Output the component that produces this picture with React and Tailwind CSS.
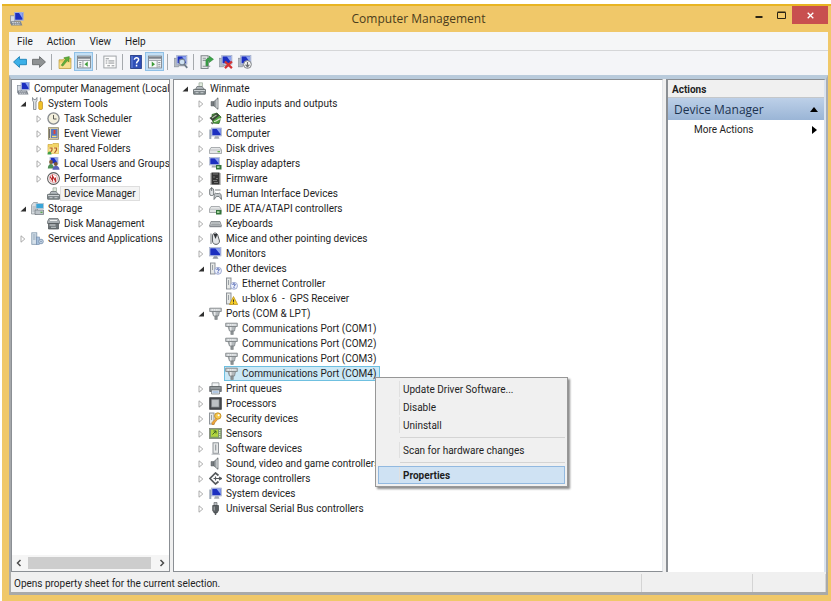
import React, { useState } from 'react';
import clsx from 'clsx';

const Icon = ({ size = 13, children }) => (
  <svg width={size} height={size} viewBox="0 0 13 13" className="shrink-0" aria-hidden="true">
    {children}
  </svg>
);

/* Shared icon parts */
const Screen = ({ x = 4, y = 0, w = 8, h = 7 }) => (
  <g>
    <rect x={x} y={y} width={w} height={h} fill="#ccd6ee" stroke="#9aa5c4" strokeWidth=".6" />
    <rect x={x + 0.8} y={y + 0.8} width={w - 1.6} height={h - 1.6} fill="#1c2fc0" />
    <path d={`M${x + w / 2} ${y + 0.8}h${w / 2 - 0.8}v${h - 2.5}z`} fill="#8ea5f0" />
  </g>
);

const Chip = () => (
  <g>
    <rect x="7" y="8" width="5.5" height="4.5" fill="#34733b" />
    <rect x="8" y="9.200" width="2.500" height="1.800" fill="#a9d7a2" />
  </g>
);

const Tower = ({ x = 1 }) => (
  <g>
    <rect x={x + 0.5} y="1" width="4.5" height="11" fill="#e6e8e6" stroke="#858b90" strokeWidth=".9" />
    <path d={`M${x + 2.5} 3v5`} stroke="#9aa0a5" strokeWidth="1" />
  </g>
);

/* Small tower and monitor used by the toolbar's device buttons */
const Machine = () => (
  <g>
    <rect x="0" y="3" width="4" height="8" fill="#b4bac2" stroke="#858c96" strokeWidth=".6" />
    <Screen x={2.5} y={0.5} w={9.5} h={8} />
    <path d="M5 9h4l1 1.500H4z" fill="#9ca2ab" />
  </g>
);

const ICONS = {
  management: (
    <>
      <rect x=".5" y="3.5" width="4" height="7" fill="#d7dce3" stroke="#858d99" strokeWidth=".7" />
      <Screen w={8.5} h={8} />
      <path d="M.5 8.500h9.500l1.500 4H1z" fill="#7e858e" />
      <path d="M2 9.800h7M2.500 11.300h7" stroke="#e1e5ea" strokeWidth=".8" strokeDasharray="1.500 .6" />
    </>
  ),
  tools: (
    <>
      <path d="M1.500 .5v3l1 1.500V12.500h2.500V5l1-1.500v-3L4.700 2.500h-2z" fill="#dde0e3" stroke="#6b737c" strokeWidth=".7" />
      <path d="M9.500 .5v5" stroke="#8f969d" strokeWidth="1.200" />
      <rect x="7.700" y="4.500" width="3.800" height="8" rx="1.200" fill="#f1c22a" stroke="#b37b10" strokeWidth=".6" />
    </>
  ),
  clock: (
    <>
      <circle cx="6.500" cy="6.500" r="6.200" fill="#85898d" />
      <circle cx="6.500" cy="6.500" r="4.900" fill="#f3efdc" />
      <path d="M6.500 3v4h3" stroke="#5b5b55" strokeWidth="1" fill="none" />
    </>
  ),
  event: (
    <>
      <rect x="1.500" y=".7" width="10" height="11.600" fill="#d8cfa9" stroke="#8c8468" strokeWidth=".8" />
      <rect x="4" y="2" width="6.500" height="9" fill="#5a78bd" />
      <path d="M7.500 3v4" stroke="#e64332" strokeWidth="1.800" />
      <path d="M5 9.500h4.500" stroke="#f4df79" strokeWidth="1.500" />
      <path d="M2.500 2v9" stroke="#76706b" strokeWidth="1" />
    </>
  ),
  folderShare: (
    <>
      <path d="M1 2.500h4l1-1h5.500v10H1z" fill="#f2d565" stroke="#c69b2b" strokeWidth=".6" />
      <path d="M1.500 5h10v6.500h-10z" fill="#f9e48f" />
      <path d="M2.500 6h2.500v2l-2 3M7 6h2.500v2l-2 3" stroke="#b35f2a" strokeWidth="1.200" fill="none" />
      <path d="M.5 12.500c0-4 4-4 4 0z" fill="#3fa04a" />
    </>
  ),
  users: (
    <>
      <Screen x={3} y={0} w={8} h={7} />
      <circle cx="4" cy="5" r="1.900" fill="#8a5f34" />
      <path d="M.8 11.500c0-6 6.200-6 6.200 0z" fill="#4f8f57" />
      <circle cx="8.800" cy="7" r="1.900" fill="#7a5636" />
      <path d="M5.500 12.800c0-5.500 7-5.500 7 0z" fill="#5a62b8" />
    </>
  ),
  performance: (
    <>
      <circle cx="6.500" cy="6.500" r="5.900" fill="#fff" stroke="#5d5d5d" strokeWidth="1.100" />
      <circle cx="6.500" cy="6.500" r="4" fill="#fff" stroke="#d98b8b" strokeWidth=".8" />
      <path d="M3 4.500l2.500 4V4l3 5V5.500" stroke="#b92b2b" strokeWidth="1.200" fill="none" />
    </>
  ),
  device: (
    <>
      <path d="M6 5V.8h3.500V5" fill="#dfe9dc" stroke="#9aa79a" strokeWidth=".7" />
      <path d="M2.500 7.500l1.500-3h5l2.500 3z" fill="#b4bbbf" stroke="#63696d" strokeWidth=".7" />
      <rect x=".5" y="7.300" width="12" height="5" rx=".5" fill="#7e868a" stroke="#565d60" strokeWidth=".7" />
      <path d="M1 8.500h11" stroke="#cfd4d6" strokeWidth="1.100" />
      <path d="M2.500 10.700h3M7.500 10.700h3" stroke="#d4d9db" strokeWidth=".9" />
    </>
  ),
  storage: (
    <>
      <path d="M.5 3l2-2.500h4V12h-6z" fill="#d9dee2" stroke="#858c92" strokeWidth=".7" />
      <path d="M1.500 5h4M1.500 7h4M1.500 9h2" stroke="#8d959b" strokeWidth=".7" />
      <rect x="5" y="1.500" width="7.500" height="5" fill="#3aa5d8" stroke="#b5c5d0" strokeWidth=".8" />
      <path d="M4 8h8.500v4.500H4z" fill="#bcc3c9" stroke="#6c737a" strokeWidth=".7" />
      <rect x="9.500" y="9.700" width="2" height="1.200" fill="#52a944" />
    </>
  ),
  diskMgmt: (
    <>
      <path d="M2 1.500h9l1.500 3v2H.5v-2z" fill="#a6acb0" stroke="#62686c" strokeWidth=".7" />
      <path d="M3 3.500h7" stroke="#eef0f0" strokeWidth="1" />
      <path d="M1.500 6.500h10v5.500h-10z" fill="#6c7377" stroke="#4b5053" strokeWidth=".7" />
      <path d="M2.500 8h6" stroke="#dde1e2" strokeWidth="1" />
      <path d="M4 10.300h5" stroke="#c2c7c9" strokeWidth="1" />
    </>
  ),
  services: (
    <>
      <rect x=".8" y=".8" width="5" height="11.500" fill="#d5e0ea" stroke="#7f95aa" strokeWidth=".8" />
      <path d="M2 3h2.500M2 5h2.500M2 7h2.500" stroke="#7f95aa" strokeWidth=".8" />
      <rect x="5.500" y="5" width="3" height="7.500" fill="#a5bedb" stroke="#6d87a8" strokeWidth=".6" />
      <circle cx="10" cy="9.500" r="2.300" fill="#c6d5e4" stroke="#7e96b1" strokeWidth=".9" />
      <circle cx="10" cy="9.500" r=".7" fill="#6d87a8" />
    </>
  ),
  speaker: (
    <>
      <path d="M2 4.500h3v4.500H2z" fill="#777c80" stroke="#5c6164" strokeWidth=".5" />
      <path d="M5 4.500L9 .8v11.500L5 9z" fill="#9ba1a5" stroke="#5c6164" strokeWidth=".7" />
      <path d="M8 2.500v8.300" stroke="#d5d9db" strokeWidth="1.200" />
    </>
  ),
  battery: (
    <>
      <path d="M3 2.500l5-1.500 4 4-2 6.500-6-.5z" fill="#4fa03f" stroke="#2e6424" strokeWidth=".8" />
      <path d="M.5 6l7-5 3 2.500-7 5.500z" fill="#3c443a" />
      <path d="M3 6l4.500-3" stroke="#a9c79c" strokeWidth="1.200" />
      <path d="M5 9.500c3 0 4-3 7-2.500" stroke="#dfe7d4" strokeWidth="1.200" fill="none" />
      <path d="M2 10.500l2 1.500" stroke="#5d635a" strokeWidth="1.200" />
    </>
  ),
  computer: (
    <>
      <rect x=".3" y="2.500" width="2" height="9.500" fill="#9aa6b6" />
      <Screen x={2.5} y={1} w={10} h={8} />
      <path d="M6 9.300h3.500l1 2.500H5z" fill="#a5aab2" />
    </>
  ),
  disk: (
    <>
      <path d="M2 5.500h9l1.500 2.500v3.500H.5V8z" fill="#e4e6e7" stroke="#8c9194" strokeWidth=".7" />
      <path d="M.8 8h11.500" stroke="#a8adb0" strokeWidth=".6" />
      <rect x="8.500" y="9" width="2.500" height="1.300" fill="#5db04b" />
    </>
  ),
  display: (
    <>
      <Screen x={0.5} y={0.5} w={10} h={7.5} />
      <path d="M3 8.500h4l.5 2H2.500z" fill="#a5aab2" />
      <Chip />
    </>
  ),
  firmware: (
    <>
      <path d="M1 2h11M1 4h11M1 6h11M1 8h11M1 10h11M1 12h11" stroke="#777" strokeWidth=".9" />
      <rect x="2.500" y=".5" width="8" height="12" fill="#333" />
      <path d="M4 2h5M4 5h2M7 6.500h2M4 8.500h4M5 10.500h4" stroke="#858585" strokeWidth=".8" />
    </>
  ),
  hid: (
    <>
      <rect x=".7" y="1.500" width="4" height="7" rx="1.500" fill="#e0e3e5" stroke="#686d71" strokeWidth=".9" />
      <path d="M2.700 0v4M6 3h5.500" stroke="#686d71" strokeWidth=".9" />
      <path d="M5 12.500c0-6 1-7 2.500-6h2c2-1 3 1 3 6l-2.500-3h-2.500z" fill="#bfc4c7" stroke="#63696d" strokeWidth=".8" />
    </>
  ),
  ide: (
    <>
      <path d="M2 4.500h8.500L12 7v3.500H.5V7z" fill="#e4e6e7" stroke="#8c9194" strokeWidth=".7" />
      <path d="M1 7.200h10.500" stroke="#a8adb0" strokeWidth=".6" />
      <Chip />
    </>
  ),
  keyboard: (
    <>
      <path d="M2 4.500h9l1.500 4.500h-12z" fill="#d0d4d6" stroke="#777c80" strokeWidth=".8" />
      <path d="M2.500 6h8M2.200 7.500h8.800" stroke="#8a8f92" strokeWidth=".7" />
      <path d="M.5 9.700h12" stroke="#777c80" strokeWidth="1" />
    </>
  ),
  mouse: (
    <>
      <path d="M3.500 4c0-4 5-4 5.500 0l1.500 5c0 4.500-7 4.500-7 0z" fill="#e4e6e8" stroke="#4b4f52" strokeWidth=".9" />
      <path d="M4.500 2l2 5 2-5z" fill="#2f3235" />
      <path d="M2 1.500V12" stroke="#777c80" strokeWidth="1" />
    </>
  ),
  monitor: (
    <>
      <Screen x={0.5} y={0.5} w={11.5} h={8.5} />
      <path d="M5 9.300h3l1.500 2.500h-6z" fill="#8f96a3" />
    </>
  ),
  unknown: (
    <>
      <Tower />
      <circle cx="9" cy="8.800" r="3.500" fill="#eef2fb" stroke="#8b99c9" strokeWidth=".8" />
      <path d="M7.800 8c0-1.800 2.600-1.600 2.300 0-.1.700-1 .7-1.100 1.500M9 10.200v1" stroke="#2f47a6" strokeWidth="1" fill="none" />
    </>
  ),
  warning: (
    <>
      <Tower />
      <path d="M8.500 4.500l4.200 8H4.500z" fill="#f6ce27" stroke="#b98c12" strokeWidth=".7" />
      <path d="M8.500 7.500v2.300M8.500 10.700v1" stroke="#2b2b2b" strokeWidth="1" />
    </>
  ),
  port: (
    <>
      <path d="M.7 1.200h11.600v3.300H.7z" fill="#c9cdd0" stroke="#7b8083" strokeWidth=".8" />
      <path d="M2.500 2.800h8" stroke="#f4f5f5" strokeWidth="1.200" strokeDasharray="1.500 .8" />
      <path d="M3 4.500h7.500L9.500 9H4.500z" fill="#b4b9bc" stroke="#777c80" strokeWidth=".7" />
      <path d="M5.800 9h2.500v3.500H5.800z" fill="#8e9396" stroke="#6f7477" strokeWidth=".5" />
      <path d="M5.800 5v3.500" stroke="#f4f5f5" strokeWidth="1.200" />
    </>
  ),
  printer: (
    <>
      <path d="M3 .8h7V5H3z" fill="#f2f4f5" stroke="#84898c" strokeWidth=".7" />
      <path d="M.7 4.500h11.600v5H.7z" fill="#7b8184" stroke="#505558" strokeWidth=".7" />
      <path d="M1.500 6h10" stroke="#b9bdc0" strokeWidth=".8" />
      <path d="M2.500 8h8v4h-8z" fill="#e8eef5" stroke="#6b7073" strokeWidth=".7" />
      <path d="M3.500 10h6" stroke="#5e8cc4" strokeWidth=".8" />
    </>
  ),
  processor: (
    <>
      <rect x=".8" y=".8" width="11.400" height="11.400" fill="#4b4e52" stroke="#33363a" />
      <rect x="2.700" y="2.700" width="7.300" height="7.300" fill="#bcc0c4" stroke="#8b8f93" strokeWidth=".7" />
    </>
  ),
  security: (
    <>
      <Tower x={0} />
      <circle cx="8.800" cy="4" r="3.200" fill="#f6c94b" stroke="#ba8420" strokeWidth=".8" />
      <circle cx="9.600" cy="3.300" r="1" fill="#fff" />
      <path d="M7 6.500L3 10.500v2h2l.5-1.500 3-3.500" fill="#f0a93a" stroke="#ba7420" strokeWidth=".6" />
    </>
  ),
  sensor: (
    <>
      <rect x=".5" y="1.500" width="12" height="10" fill="#7d9a66" stroke="#7c8375" strokeWidth=".8" />
      <rect x="2" y="2.700" width="7" height="7" fill="#b2d63f" />
      <path d="M3.500 7.500l3.500-3.500M4.500 4H7v2.500" stroke="#3f6423" strokeWidth="1" fill="none" />
      <path d="M10.700 3v7.500" stroke="#dbe3d2" strokeWidth="1.300" strokeDasharray="1.200 .8" />
    </>
  ),
  software: (
    <>
      <rect x="4" y=".8" width="5.500" height="10.500" fill="#e6e8e8" stroke="#858b90" strokeWidth=".9" />
      <path d="M6.700 2.500v6" stroke="#8e9499" strokeWidth="1.100" />
      <path d="M2.500 12.200h8.500" stroke="#b4b8bb" strokeWidth="1" />
    </>
  ),
  storageCtl: (
    <>
      <path d="M9.500 3.500L6.500 1 1 6.500 6.500 12l3-2.500" fill="none" stroke="#55595c" strokeWidth="1.700" />
      <path d="M4.500 6.500h8M6.500 4.500v4M10 5l2.500 1.500L10 8" fill="none" stroke="#55595c" strokeWidth="1.200" />
    </>
  ),
  usb: (
    <>
      <path d="M5 .5h3V4H5z" fill="#b8bcbf" stroke="#6b7073" strokeWidth=".7" />
      <path d="M3.700 3.500h5.800v5L8 11H5.200L3.700 8.500z" fill="#5a5f62" stroke="#3e4245" strokeWidth=".7" />
      <path d="M5.200 4.500v4" stroke="#b3b7ba" strokeWidth=".9" />
      <path d="M6.500 11v2" stroke="#55595c" strokeWidth="1.400" />
    </>
  ),
};

const TOOL_ICONS = {
  back: <path d="M.5 6.500L6 1.500V4h6.500v5H6v2.500z" fill="#3cb0e8" stroke="#1b7fb5" strokeWidth=".8" />,
  forward: <path d="M12.500 6.500L7 1.500V4H.5v5H7v2.500z" fill="#8f9294" stroke="#65686a" strokeWidth=".8" />,
  up: (
    <>
      <path d="M1 4.500h3.500L6 3h6v9.500H1z" fill="#eed06d" stroke="#b9973a" strokeWidth=".7" />
      <path d="M1.500 7h10v5h-10z" fill="#f6e08f" />
      <path d="M3 9.500L7 4 5.500 2.500 10.500 1.500 10 6.500 8.700 5.200 4.500 10.300z" fill="#5fb03c" stroke="#3e8423" strokeWidth=".5" />
    </>
  ),
  tree: (
    <>
      <rect x=".5" y="1" width="12" height="11" fill="#f7f8f9" stroke="#7d838b" strokeWidth=".8" />
      <path d="M.5 2.500h12" stroke="#7d838b" strokeWidth="2" />
      <path d="M1 5h11M5.500 5v7" stroke="#a4a9ae" strokeWidth="1" />
      <path d="M2 7h2M2 8.700h2M2 10.400h2" stroke="#7b8188" strokeWidth=".8" />
      <path d="M10 6v5L7 8.500z" fill="#3d9c38" />
    </>
  ),
  properties: (
    <>
      <rect x=".8" y="1" width="11.400" height="11" fill="#fcfcfc" stroke="#9da1a5" strokeWidth=".9" />
      <path d="M2.500 3.500h3M2.500 5.500h1.500M5 5.500h5.500M2.500 7.500h1.500M5 7.500h5.500M4 10h2.500M8 10h2.500" stroke="#8b8f93" strokeWidth=".9" />
    </>
  ),
  help: (
    <>
      <rect x="1.500" y=".5" width="10" height="12" fill="#2f4fb8" stroke="#223a86" strokeWidth=".8" />
      <path d="M2.800 1v11" stroke="#7f98e3" strokeWidth=".8" />
      <path d="M5 4.500c0-2.700 4.200-2.500 3.900 0C8.700 6 7 6 7 7.800M7 9v1.600" stroke="#fff" strokeWidth="1.400" fill="none" />
    </>
  ),
  pane: (
    <>
      <rect x=".5" y="1" width="12" height="11" fill="#f7f8f9" stroke="#7d838b" strokeWidth=".8" />
      <path d="M.5 2.500h12" stroke="#7d838b" strokeWidth="2" />
      <path d="M1 5h11M8.500 5v7" stroke="#a4a9ae" strokeWidth="1" />
      <path d="M9.500 7h2M9.500 8.700h2M9.500 10.400h2" stroke="#7b8188" strokeWidth=".8" />
      <path d="M3.500 6v5l3-2.500z" fill="#3d9c38" />
    </>
  ),
  scan: (
    <>
      <Machine />
      <circle cx="7.500" cy="6.500" r="2.700" fill="#cfe2f2" stroke="#7a8694" strokeWidth="1" />
      <path d="M9.300 8.500l3 3.500" stroke="#6e7a88" strokeWidth="1.600" />
    </>
  ),
  update: (
    <>
      <rect x="1" y=".7" width="6.500" height="11.800" fill="#e6e9e9" stroke="#7b8286" strokeWidth=".9" />
      <path d="M2.500 3h3M2.500 5h3M2.500 10.500h7" stroke="#8e9499" strokeWidth="1" />
      <path d="M5.500 10V5.500C5.500 3.500 7 3 8.500 3V1l4 3-4 3V5.200h-1V10z" fill="#3da54a" stroke="#257a31" strokeWidth=".5" />
    </>
  ),
  uninstall: (
    <>
      <Machine />
      <path d="M5.500 6l6.500 6.200M12 6l-6.500 6.200" stroke="#d43333" strokeWidth="2.100" />
    </>
  ),
  disable: (
    <>
      <Machine />
      <circle cx="8.800" cy="8.800" r="3.600" fill="#f5f5f5" stroke="#7c7f83" strokeWidth=".9" />
      <path d="M8.800 6.500v4M7 9l1.800 2 1.800-2" stroke="#6a6d71" strokeWidth="1.100" fill="none" />
    </>
  ),
};

const TOOLBAR = [
  [['back', 'Back'], ['forward', 'Forward']],
  [['up', 'Up one level'], ['tree', 'Show/Hide Console Tree', true]],
  [['properties', 'Properties']],
  [['help', 'Help'], ['pane', 'Show/Hide Action Pane', true]],
  [['scan', 'Scan for hardware changes']],
  [['update', 'Update Driver Software'], ['uninstall', 'Uninstall'], ['disable', 'Disable']],
];

const CONSOLE_TREE = [
  { label: 'Computer Management (Local', icon: 'management', level: -1 },
  { label: 'System Tools', icon: 'tools', level: 0, state: 'open' },
  { label: 'Task Scheduler', icon: 'clock', level: 1, state: 'closed' },
  { label: 'Event Viewer', icon: 'event', level: 1, state: 'closed' },
  { label: 'Shared Folders', icon: 'folderShare', level: 1, state: 'closed' },
  { label: 'Local Users and Groups', icon: 'users', level: 1, state: 'closed' },
  { label: 'Performance', icon: 'performance', level: 1, state: 'closed' },
  { label: 'Device Manager', icon: 'device', level: 1, marked: true },
  { label: 'Storage', icon: 'storage', level: 0, state: 'open' },
  { label: 'Disk Management', icon: 'diskMgmt', level: 1 },
  { label: 'Services and Applications', icon: 'services', level: 0, state: 'closed' },
];

const DEVICE_TREE = [
  { label: 'Winmate', icon: 'device', level: 0, state: 'open' },
  { label: 'Audio inputs and outputs', icon: 'speaker', level: 1, state: 'closed' },
  { label: 'Batteries', icon: 'battery', level: 1, state: 'closed' },
  { label: 'Computer', icon: 'computer', level: 1, state: 'closed' },
  { label: 'Disk drives', icon: 'disk', level: 1, state: 'closed' },
  { label: 'Display adapters', icon: 'display', level: 1, state: 'closed' },
  { label: 'Firmware', icon: 'firmware', level: 1, state: 'closed' },
  { label: 'Human Interface Devices', icon: 'hid', level: 1, state: 'closed' },
  { label: 'IDE ATA/ATAPI controllers', icon: 'ide', level: 1, state: 'closed' },
  { label: 'Keyboards', icon: 'keyboard', level: 1, state: 'closed' },
  { label: 'Mice and other pointing devices', icon: 'mouse', level: 1, state: 'closed' },
  { label: 'Monitors', icon: 'monitor', level: 1, state: 'closed' },
  { label: 'Other devices', icon: 'unknown', level: 1, state: 'open' },
  { label: 'Ethernet Controller', icon: 'unknown', level: 2 },
  { label: 'u-blox 6  -  GPS Receiver', icon: 'warning', level: 2 },
  { label: 'Ports (COM & LPT)', icon: 'port', level: 1, state: 'open' },
  { label: 'Communications Port (COM1)', icon: 'port', level: 2 },
  { label: 'Communications Port (COM2)', icon: 'port', level: 2 },
  { label: 'Communications Port (COM3)', icon: 'port', level: 2 },
  { label: 'Communications Port (COM4)', icon: 'port', level: 2, menu: true },
  { label: 'Print queues', icon: 'printer', level: 1, state: 'closed' },
  { label: 'Processors', icon: 'processor', level: 1, state: 'closed' },
  { label: 'Security devices', icon: 'security', level: 1, state: 'closed' },
  { label: 'Sensors', icon: 'sensor', level: 1, state: 'closed' },
  { label: 'Software devices', icon: 'software', level: 1, state: 'closed' },
  { label: 'Sound, video and game controllers', icon: 'speaker', level: 1, state: 'closed' },
  { label: 'Storage controllers', icon: 'storageCtl', level: 1, state: 'closed' },
  { label: 'System devices', icon: 'computer', level: 1, state: 'closed' },
  { label: 'Universal Serial Bus controllers', icon: 'usb', level: 1, state: 'closed' },
];

const INDENT = { '-1': 'pl-1', 0: 'pl-2', 1: 'pl-6', 2: 'pl-10' };

const Expander = ({ state }) => (
  <span className="flex w-[10px] shrink-0 items-center">
    {state && (
      <svg width="7" height="8" viewBox="0 0 7 8" aria-hidden="true">
        {state === 'open' ? (
          <path d="M6 1.500v5H.5z" fill="#2f2f2f" />
        ) : (
          <path d="M1 .8v6.400L4.800 4z" fill="#fff" stroke="#a3a3a3" strokeWidth=".9" />
        )}
      </svg>
    )}
  </span>
);

const ContextMenu = () => (
  <div role="menu" className="absolute top-[11px] left-[201px] z-10 w-[193px] border border-[#979797] bg-[#f0f0f0] p-0.5 shadow-[2px_2px_2px_rgba(0,0,0,0.45)]">
    <MenuItem>Update Driver Software...</MenuItem>
    <MenuItem>Disable</MenuItem>
    <MenuItem>Uninstall</MenuItem>
    <hr className="my-[3px] ml-[22px] border-[#d4d4d4]" />
    <MenuItem>Scan for hardware changes</MenuItem>
    <hr className="my-[3px] ml-[22px] border-[#d4d4d4]" />
    <MenuItem active>Properties</MenuItem>
  </div>
);

const MenuItem = ({ active, children }) => (
  <button
    type="button"
    role="menuitem"
    className={clsx(
      'flex h-[18px] w-full items-center border',
      active ? 'border-[#92b9e0] bg-[#cfe2f3] font-bold' : 'border-transparent'
    )}
  >
    <span className="ml-5 flex h-full items-center border-l border-[#e0e0e0] pl-[3px]">{children}</span>
  </button>
);

const Tree = ({ label, items }) => {
  const [selected, setSelected] = useState('Communications Port (COM4)');

  return (
    <ul role="tree" aria-label={label} className="pt-px">
      {items.map((item) => (
        <li
          key={item.label}
          role="treeitem"
          aria-selected={selected === item.label}
          className={clsx('relative flex h-[15px] items-center', INDENT[item.level])}
        >
          {item.level >= 0 && <Expander state={item.state} />}
          <button
            type="button"
            onClick={() => setSelected(item.label)}
            className={clsx(
              'flex h-[15px] items-center border whitespace-pre',
              selected === item.label ? 'border-[#6fc0e0] bg-[#cbe8f6]' : 'border-transparent'
            )}
          >
            <Icon>{ICONS[item.icon]}</Icon>
            <span
              className={clsx(
                'ml-px px-[3px]',
                item.marked && 'bg-[#f4f4f4] outline outline-[#dedede]'
              )}
            >
              {item.label}
            </span>
          </button>
          {item.menu && <ContextMenu />}
        </li>
      ))}
    </ul>
  );
};

const App = () => {
  return (
    <div className="h-screen min-h-[601px] bg-white pt-1 pl-0.5 font-[Roboto,'Open_Sans',sans-serif] text-[10px] leading-[13px] text-[#1e1e1e]">
      <div className="flex h-full flex-col border-t-2 border-[#e8b422] bg-[#f0c869] pr-[3px] pb-[6px] pl-[7px]">
        {/* Title bar */}
        <header className="grid h-[26px] shrink-0 grid-cols-[80px_1fr_80px]">
          <div className="flex items-center pl-px">
            <Icon size={14}>{ICONS.management}</Icon>
          </div>
          <h1 className="self-center text-center font-['Open_Sans',sans-serif] text-[12px] leading-[16px] text-[#4a3c1c]">
            Computer Management
          </h1>
          <div className="flex h-[18px] justify-end">
            <button type="button" aria-label="Minimize" className="flex w-[22px] items-center justify-center">
              <svg width="8" height="8" viewBox="0 0 8 8"><path d="M.5 6h7" stroke="#2a2414" strokeWidth="2" /></svg>
            </button>
            <button type="button" aria-label="Maximize" className="flex w-[22px] items-center justify-center">
              <svg width="9" height="8" viewBox="0 0 9 8"><path d="M.5 1.500h8v6h-8zM.5 1h8" stroke="#2a2414" fill="none" /></svg>
            </button>
            <button type="button" aria-label="Close" className="flex w-9 items-center justify-center bg-[#c84f4f]">
              <svg width="7" height="7" viewBox="0 0 7 7"><path d="M.7.7l5.600 5.600M6.300.7L.7 6.300" stroke="#fff" strokeWidth="1.300" /></svg>
            </button>
          </div>
        </header>

        {/* Menu bar */}
        <nav className="flex h-[19px] shrink-0 items-center border-b border-[#d5d6d8] bg-[#f5f6f7] pl-px">
          {['File', 'Action', 'View', 'Help'].map((item) => (
            <button key={item} type="button" className="px-[7px]">{item}</button>
          ))}
        </nav>

        {/* Toolbar */}
        <div role="toolbar" className="flex h-6 shrink-0 items-start bg-[#f4f5f8] pt-px pl-px">
          {TOOLBAR.map((group, i) => (
            <React.Fragment key={i}>
              {i > 0 && <span className="mx-[3px] mt-0.5 h-4 w-px bg-[#a5a9ad]" />}
              {group.map(([name, label, pressed]) => (
                <button
                  key={name}
                  type="button"
                  aria-label={label}
                  className={clsx(
                    'flex h-[19px] w-[19px] items-center justify-center border',
                    pressed ? 'border-[#8fc0e6] bg-[#c3dff5]' : 'border-transparent'
                  )}
                >
                  <Icon size={14}>{TOOL_ICONS[name]}</Icon>
                </button>
              ))}
            </React.Fragment>
          ))}
        </div>

        {/* Panes */}
        <main className="flex min-h-0 flex-1 border-t-4 border-r-2 border-l-2 border-t-[#b9cbdc] border-r-[#a9aeb4] border-l-[#a5a8ab] bg-[#f0f0f0]">
          <section className="flex w-[159px] shrink-0 flex-col overflow-hidden border border-[#8b8f94] bg-white">
            <div className="flex-1">
              <Tree label="Console tree" items={CONSOLE_TREE} />
            </div>
            <div className="flex h-4 items-center justify-between bg-[#f5f5f5] px-1">
              <button type="button" aria-label="Scroll left">
                <svg width="6" height="8" viewBox="0 0 6 8"><path d="M4.500 1L1.500 4l3 3" stroke="#4b4b4b" strokeWidth="1.500" fill="none" /></svg>
              </button>
              <span className="mr-2 ml-1.5 h-3 flex-1 bg-[#cdcdcd]" />
              <button type="button" aria-label="Scroll right">
                <svg width="6" height="8" viewBox="0 0 6 8"><path d="M1.500 1l3 3-3 3" stroke="#4b4b4b" strokeWidth="1.500" fill="none" /></svg>
              </button>
            </div>
          </section>

          <section className="ml-[3px] min-w-0 flex-1 border border-[#8b8f94] border-r-[#e3e6ea] bg-white">
            <Tree label="Devices" items={DEVICE_TREE} />
          </section>

          <aside className="ml-[3px] w-[160px] shrink-0 border-t border-r-2 border-l-2 border-t-[#8b8f94] border-r-[#dbe4f0] border-l-[#8b8f94] bg-white">
            <h2 className="h-[18px] border-b border-[#c4c7ca] bg-[#f0f0f0] px-1 pt-[3px] font-bold">Actions</h2>
            <button type="button" className="flex h-[22px] w-full items-center justify-between bg-gradient-to-b from-[#bdd0e8] to-[#9ab5d6] pt-px pr-[6px] pl-[6px] font-['Open_Sans',sans-serif] text-[12px] leading-[16px] text-[#1c3350]">
              Device Manager
              <svg width="8" height="5" viewBox="0 0 8 5"><path d="M4 0l4 5H0z" fill="#000" /></svg>
            </button>
            <button type="button" className="flex h-[19px] w-full items-center justify-between pr-[7px] pl-[26px]">
              More Actions
              <svg width="5" height="8" viewBox="0 0 5 8"><path d="M0 0l5 4-5 4z" fill="#000" /></svg>
            </button>
          </aside>
        </main>

        {/* Status bar */}
        <footer className="flex h-[23px] shrink-0 items-stretch border-r-2 border-b-[3px] border-l-2 border-[#a9aaa9] bg-[#f0f0f0] pt-0.5">
          <p className="flex flex-1 items-center pl-[3px]">Opens property sheet for the current selection.</p>
          <span className="w-[111px] border-l border-[#d4d4d4]" />
          <span className="w-[74px] border-r border-l border-[#d4d4d4]" />
        </footer>
      </div>
    </div>
  );
};

export default App;
